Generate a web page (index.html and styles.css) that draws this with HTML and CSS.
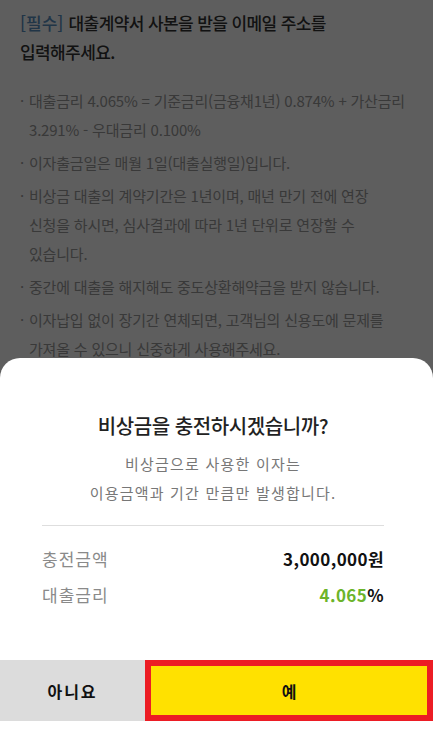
FILE: index.html
```html
<!DOCTYPE html>
<html lang="ko">
<head>
    <meta charset="UTF-8">
    <meta name="viewport" content="width=device-width, initial-scale=1.0">
    <title>비상금 충전</title>
    <link rel="stylesheet" href="styles.css">
</head>
<body>
    <div class="screen">
        <div class="page">
            <h2 class="email-title"><span class="required">[필수]</span> 대출계약서 사본을 받을 이메일 주소를 입력해주세요.</h2>

            <ul class="notice-list">
                <li>대출금리 4.065% = 기준금리(금융채1년) 0.874% + 가산금리 3.291% - 우대금리 0.100%</li>
                <li>이자출금일은 매월 1일(대출실행일)입니다.</li>
                <li>비상금 대출의 계약기간은 1년이며, 매년 만기 전에 연장 신청을 하시면, 심사결과에 따라 1년 단위로 연장할 수 있습니다.</li>
                <li>중간에 대출을 해지해도 중도상환해약금을 받지 않습니다.</li>
                <li>이자납입 없이 장기간 연체되면, 고객님의 신용도에 문제를 가져올 수 있으니 신중하게 사용해주세요.</li>
                <li>대출 신청 후 취소는 영업일 기준으로 가능합니다.</li>
            </ul>
        </div>

        <div class="dim">
            <div class="sheet">
                <div class="sheet-body">
                    <div class="sheet-title">비상금을 충전하시겠습니까?</div>
                    <p class="sheet-desc">비상금으로 사용한 이자는<br>이용금액과 기간 만큼만 발생합니다.</p>

                    <div class="info-rows">
                        <div class="info-row">
                            <span class="info-label">충전금액</span>
                            <span class="info-value">3,000,000원</span>
                        </div>
                        <div class="info-row">
                            <span class="info-label">대출금리</span>
                            <span class="info-value"><em class="rate">4.065</em>%</span>
                        </div>
                    </div>
                </div>

                <div class="sheet-buttons">
                    <button class="btn btn-no">아니요</button>
                    <button class="btn btn-yes">예</button>
                </div>
            </div>
        </div>
    </div>
</body>
</html>
```

FILE: styles.css
```css
* {
    margin: 0;
    padding: 0;
    box-sizing: border-box;
}

body {
    font-family: 'Noto Sans CJK KR', 'Noto Sans', sans-serif;
    background: #fff;
}

.screen {
    position: relative;
    width: 433px;
    height: 721px;
    overflow: hidden;
    background: #fff;
}

.page {
    padding: 8px 20px 0 20px;
    word-break: keep-all;
}

.email-title {
    font-size: 17px;
    font-weight: 500;
    line-height: 29px;
    letter-spacing: -0.6px;
    color: #333;
}

.required {
    color: #5a8fc2;
    letter-spacing: 0;
    margin-right: 1px;
}

.notice-list {
    list-style: none;
    margin-top: 20px;
}

.notice-list li {
    position: relative;
    padding-left: 9px;
    font-size: 15px;
    line-height: 29px;
    letter-spacing: -0.2px;
    color: #9a9a9a;
    margin-bottom: 4px;
}

.notice-list li::before {
    content: '·';
    position: absolute;
    left: 0;
    top: 0;
}

/* 바텀시트 뒤 딤 처리 */
.dim {
    position: absolute;
    inset: 0;
    background: rgba(0, 0, 0, 0.63);
    display: flex;
    flex-direction: column;
    justify-content: flex-end;
}

.sheet {
    background: #fff;
    border-radius: 20px 20px 0 0;
    height: 363px;
    display: flex;
    flex-direction: column;
}

.sheet-body {
    flex: 1;
    padding: 54px 49px 0 42px;
    text-align: center;
}

.sheet-title {
    font-size: 20px;
    font-weight: 500;
    color: #222;
    letter-spacing: -0.4px;
    line-height: 28px;
}

.sheet-desc {
    margin-top: 9px;
    font-size: 15px;
    line-height: 29px;
    color: #777;
    letter-spacing: 1.2px;
}

.info-rows {
    margin-top: 18px;
    border-top: 1px solid #dedede;
    padding-top: 14px;
}

.info-row {
    display: flex;
    justify-content: space-between;
    align-items: center;
    height: 36px;
}

.info-label {
    font-size: 17px;
    color: #8a8a8a;
    letter-spacing: 1px;
}

.info-value {
    font-size: 17px;
    font-weight: 700;
    color: #111;
    letter-spacing: 0.4px;
}

.rate {
    font-style: normal;
    color: #6cb42a;
}

.sheet-buttons {
    display: flex;
    height: 61px;
}

.btn {
    border: none;
    font-family: inherit;
    font-size: 16px;
    font-weight: 700;
    color: #111;
    cursor: pointer;
}

.btn-no {
    width: 145px;
    background: #dcdcdc;
    letter-spacing: 2px;
}

.btn-yes {
    flex: 1;
    background: #ffe100;
    border: 6px solid #ec1c24;
}
```
